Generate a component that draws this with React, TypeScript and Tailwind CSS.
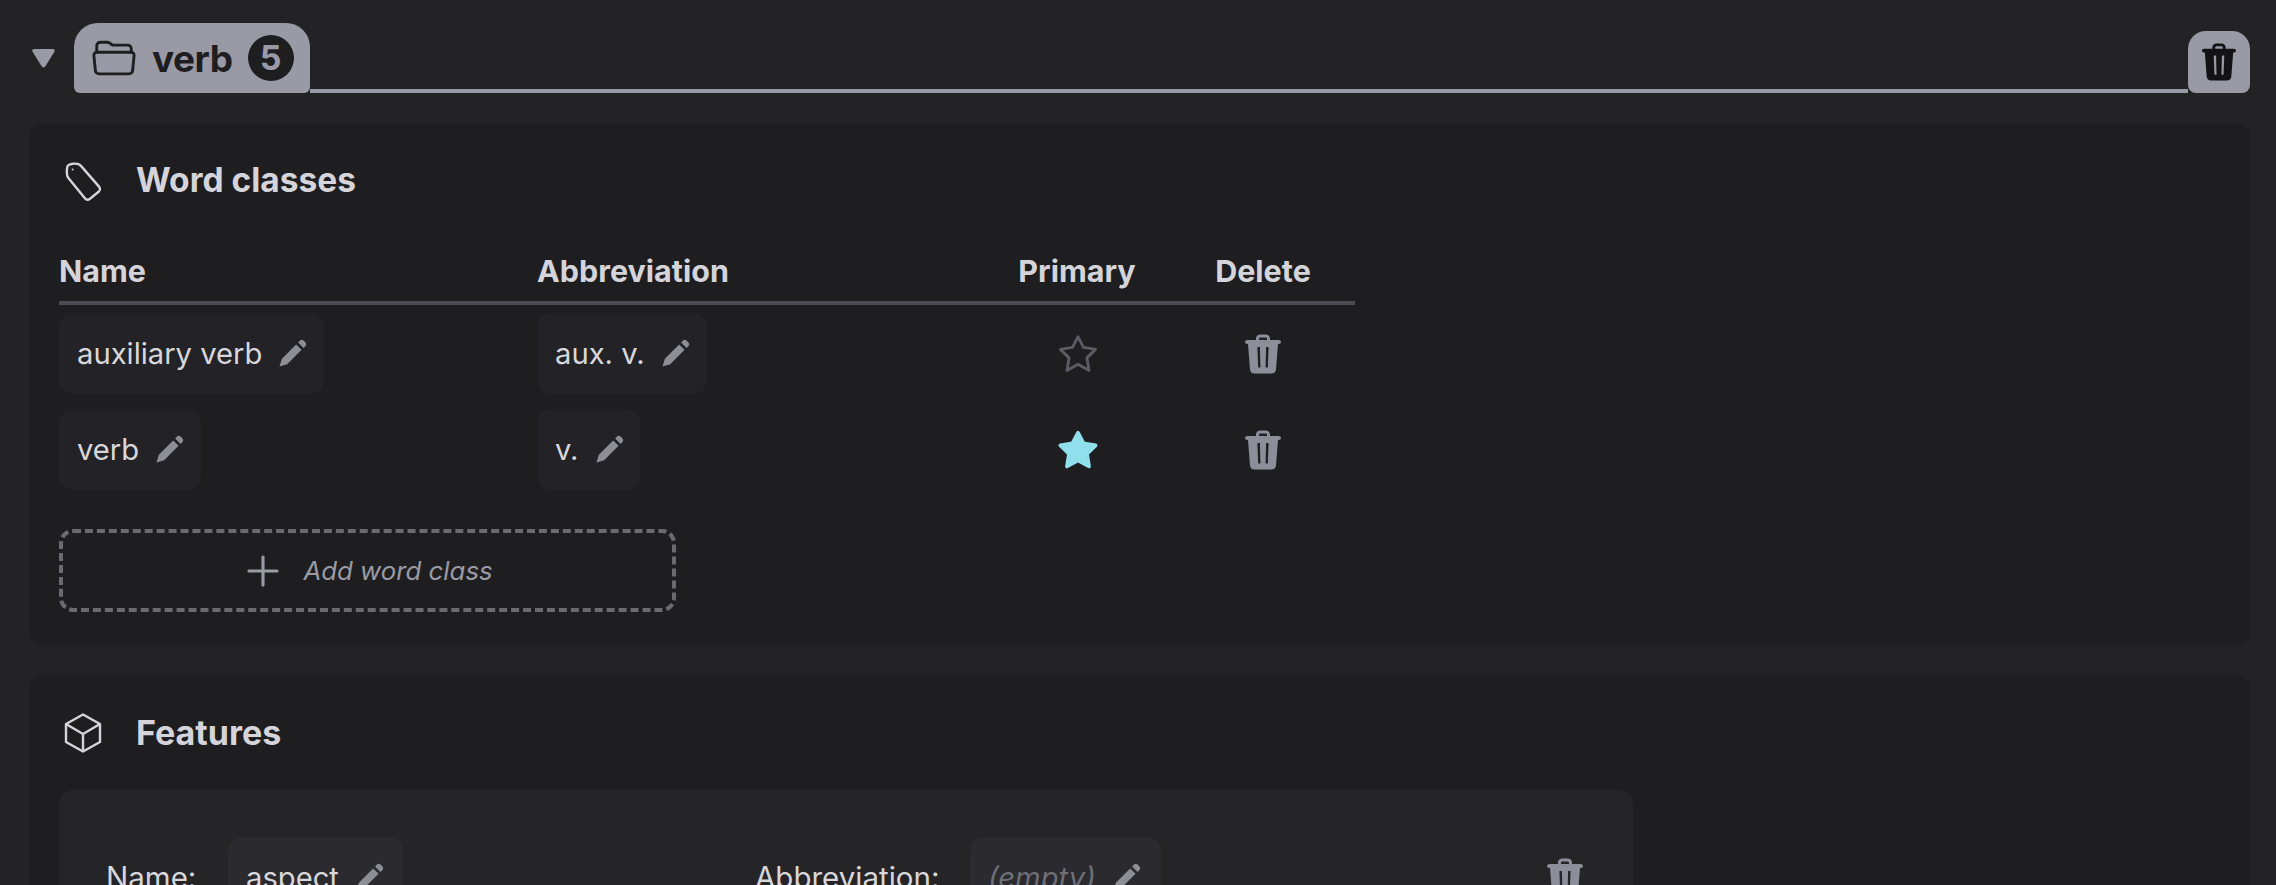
import { IoAddOutline, IoFolderOpenOutline } from 'react-icons/io5'

const FONT = 'font-["Inter","Liberation_Sans",sans-serif]'

const ROWS = [
  { name: 'auxiliary verb', nameW: 'w-[265px]', abbr: 'aux. v.', abbrW: 'w-[170px]', primary: false },
  { name: 'verb', nameW: 'w-[142px]', abbr: 'v.', abbrW: 'w-[103px]', primary: true },
]

function TagIcon() {
  return (
    <svg viewBox="0 0 37 39" className="h-[39px] w-[37px]" fill="none" stroke="#d4d4da" strokeWidth="2.4" strokeLinejoin="round">
      <path d="M3 3.5 C5 1.5 11 1.2 13.5 2.2 C14.6 2.6 15.6 3.4 16.4 4.4 L34 24.6 C35.4 26.2 35.2 28.4 33.6 29.8 L25 36.8 C23.4 38 21.2 37.8 19.9 36.2 L3.4 16 C2.6 15 2.1 13.8 2 12.4 C1.8 9.6 1.6 5 3 3.5 Z" />
      <circle cx="7.6" cy="7.4" r="1" fill="#d4d4da" stroke="none" />
    </svg>
  )
}

function CubeIcon() {
  return (
    <svg viewBox="0 0 38 40" className="h-[40px] w-[38px]" fill="none" stroke="#d4d4da" strokeWidth="2.4" strokeLinejoin="round">
      <path d="M19 1.5 L36 11 V29 L19 38.5 L2 29 V11 Z" />
      <path d="M2 11 L19 21 L36 11 M19 21 V38.5" />
    </svg>
  )
}

function PencilIcon() {
  return (
    <svg viewBox="0 0 30 30" className="h-[29px] w-[29px] shrink-0" fill="#8e8e96">
      <path d="M1.5 28.5 L4 20.5 L18.8 5.6 L24.4 11.2 L9.5 26 Z" />
      <path d="M20.8 3.6 L22.8 1.6 C23.8 .6 25.4 .6 26.4 1.6 L28.4 3.6 C29.4 4.6 29.4 6.2 28.4 7.2 L26.4 9.2 Z" />
    </svg>
  )
}

function TrashIcon({ color, className }: { color: string; className: string }) {
  return (
    <svg viewBox="0 0 36 40" className={className} fill={color}>
      <path fillRule="evenodd" d="M11 6 V4.5 C11 2 13 .5 15.5 .5 H20.5 C23 .5 25 2 25 4.5 V6 H33.5 C35 6 36 7 36 8 C36 9.2 35 10 33.5 10 H33 L31 35.5 C30.8 38 29 39.5 26.5 39.5 H9.5 C7 39.5 5.2 38 5 35.5 L3 10 H2.5 C1 10 0 9.2 0 8 C0 7 1 6 2.5 6 Z M14 6 H22 V4.8 C22 4 21.4 3.4 20.5 3.4 H15.5 C14.6 3.4 14 4 14 4.8 Z M12.4 13 L13.2 33.6 H15.4 L14.9 13 Z M21.1 13 L20.6 33.6 H22.8 L23.6 13 Z" />
    </svg>
  )
}

function StarIcon({ filled }: { filled: boolean }) {
  return (
    <svg
      viewBox="0 0 40 38"
      className="ml-[2px] mt-[3px] h-[42px] w-[44px]"
      fill={filled ? '#8fdfec' : 'none'}
      stroke={filled ? '#8fdfec' : '#5c5c64'}
      strokeWidth={filled ? 3.5 : 2.6}
      strokeLinejoin="round"
    >
      <path d="M20 2.5 L25 12.1 L36 13.9 L28.1 21.6 L30 33 L20 27.5 L10 33 L11.9 21.6 L4 13.9 L15 12.1 Z" />
    </svg>
  )
}

function Editable({ text, width, empty, inner }: { text: string; width: string; empty?: boolean; inner?: boolean }) {
  return (
    <div className={`flex h-[81px] items-center gap-[16px] rounded-[14px] pl-[18px] ${width} ${inner ? 'bg-[#2a2a2f]' : 'bg-[#232327]'}`}>
      <span className={`text-[29.2px] leading-none ${empty ? 'italic text-[#6e6e76]' : 'text-[#d8d8dc]'}`}>{text}</span>
      <PencilIcon />
    </div>
  )
}

export default function App() {
  return (
    <div className={`h-[885px] overflow-hidden bg-[#232326] pl-[29px] pr-[26px] pt-[23px] ${FONT}`}>
      <div className="flex h-[70px] items-end">
        <div className="flex h-full w-[45px] items-center">
          <svg viewBox="0 0 24 20" className="ml-[3px] h-[20px] w-[23px]" fill="#9a99a6">
            <path d="M2.5 0.5 H21.5 C23.4 0.5 24.2 2 23.4 3.6 L14 18.6 C13 20.2 11 20.2 10 18.6 L0.6 3.6 C-0.2 2 0.6 0.5 2.5 0.5 Z" />
          </svg>
        </div>
        <div className="flex h-full w-[236px] items-center rounded-t-[24px] rounded-b-[6px] bg-[#9a99a6] pl-[17px]">
          <IoFolderOpenOutline className="h-[46px] w-[46px] text-[#1e1e21]" />
          <span className="ml-[15px] text-[37px] font-bold leading-none tracking-[-0.5px] text-[#1e1e21]">verb</span>
          <span className="ml-[15px] flex h-[46px] w-[46px] items-center justify-center rounded-full bg-[#1e1e21] text-[34px] font-bold leading-none text-[#9a99a6]">5</span>
        </div>
        <div className="h-[4px] flex-1 bg-[#9a99a6]" />
        <div className="flex h-[62px] w-[62px] items-center justify-center rounded-t-[18px] rounded-b-[8px] bg-[#9a99a6]">
          <TrashIcon color="#131316" className="h-[40px] w-[34px]" />
        </div>
      </div>

      <section className="mt-[31px] h-[521px] rounded-[14px] bg-[#1e1e21] pl-[30px] pt-[38px]">
        <div className="flex h-[39px] items-center">
          <div className="ml-[6px]">
            <TagIcon />
          </div>
          <h2 className="mb-[2px] ml-[34px] text-[33.5px] font-bold leading-none text-[#d4d4da]">Word classes</h2>
        </div>

        <div className="mt-[52px] grid w-[1296px] grid-cols-[478px_446px_188px_184px] border-b-[4px] border-[#4a4a52] pb-[13px] text-[30.5px] font-bold leading-[35px] text-[#d4d4da]">
          <div>Name</div>
          <div>Abbreviation</div>
          <div className="text-center">Primary</div>
          <div className="text-center">Delete</div>
        </div>

        <div className="mt-[8px] flex w-[1296px] flex-col gap-[15px]">
          {ROWS.map((r) => (
            <div key={r.name} className="grid grid-cols-[478px_446px_188px_184px] items-center">
              <Editable text={r.name} width={r.nameW} />
              <Editable text={r.abbr} width={r.abbrW} />
              <div className="flex justify-center">
                <StarIcon filled={r.primary} />
              </div>
              <div className="flex justify-center">
                <TrashIcon color="#8e8d9a" className="h-[40px] w-[36px]" />
              </div>
            </div>
          ))}
        </div>

        <div className="mt-[39px] flex h-[83px] w-[617px] items-center justify-center gap-[15px] rounded-[14px] border-[4px] border-dashed border-[#6a6a70] pr-[4px]">
          <IoAddOutline className="h-[50px] w-[50px] text-[#9a9aa2]" />
          <span className="text-[25.8px] italic leading-none text-[#9a9aa4]">Add word class</span>
        </div>
      </section>

      <section className="mt-[30px] h-[400px] rounded-[14px] bg-[#1e1e21] pl-[30px] pt-[38px]">
        <div className="flex h-[39px] items-center">
          <div className="ml-[5px]">
            <CubeIcon />
          </div>
          <h2 className="ml-[34px] text-[34px] font-bold leading-none text-[#d4d4da]">Features</h2>
        </div>
        <div className="mt-[38px] h-[200px] w-[1574px] rounded-[14px] bg-[#252528] pl-[47px] pt-[47px]">
          <div className="flex items-center">
            <span className="w-[122px] text-[29.5px] leading-none text-[#d8d8dc]">Name:</span>
            <Editable text="aspect" width="w-[175px]" inner />
            <span className="ml-[352px] w-[215px] text-[29.5px] leading-none text-[#d8d8dc]">Abbreviation:</span>
            <Editable text="(empty)" width="w-[191px]" empty inner />
            <TrashIcon color="#8e8d9a" className="ml-[386px] h-[40px] w-[36px]" />
          </div>
        </div>
      </section>
    </div>
  )
}
